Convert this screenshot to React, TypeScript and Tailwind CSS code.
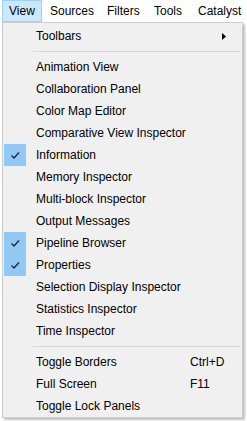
import React from "react";

type Item = { label: string; checked?: boolean; shortcut?: string; sub?: boolean } | "sep";

const items: Item[] = [
  { label: "Toolbars", sub: true },
  "sep",
  { label: "Animation View" },
  { label: "Collaboration Panel" },
  { label: "Color Map Editor" },
  { label: "Comparative View Inspector" },
  { label: "Information", checked: true },
  { label: "Memory Inspector" },
  { label: "Multi-block Inspector" },
  { label: "Output Messages" },
  { label: "Pipeline Browser", checked: true },
  { label: "Properties", checked: true },
  { label: "Selection Display Inspector" },
  { label: "Statistics Inspector" },
  { label: "Time Inspector" },
  "sep",
  { label: "Toggle Borders", shortcut: "Ctrl+D" },
  { label: "Full Screen", shortcut: "F11" },
  { label: "Toggle Lock Panels" },
];

function Check() {
  return (
    <svg width="22" height="22" viewBox="0 0 22 22">
      <path d="M7.5 11.5 L10 14 L15 8.5" fill="none" stroke="#262626" strokeWidth="1.4" />
    </svg>
  );
}

export default function App() {
  return (
    <div
      className="w-[247px] h-[421px] bg-white overflow-hidden text-[12px] text-black"
      style={{ fontFamily: '"Liberation Sans", Arial, sans-serif' }}
    >
      <div className="flex h-[22px] items-stretch pl-[2px]">
        <div className="flex items-center w-[40px] pl-[6px] bg-[#cce8ff] border border-[#99d1ff]">View</div>
        <div className="flex items-center w-[57px] pl-[8px]">Sources</div>
        <div className="flex items-center w-[47px] pl-[8px]">Filters</div>
        <div className="flex items-center w-[44px] pl-[8px]">Tools</div>
        <div className="flex items-center pl-[8px] whitespace-nowrap">Catalyst</div>
      </div>
      <div className="ml-[2px] w-[241px] bg-[#f0f0f0] border border-[#cccccc] pt-[2px] pl-[1px] pr-[1px] shadow-[2px_2px_2px_rgba(0,0,0,0.25)]">
        {items.map((it, i) =>
          it === "sep" ? (
            <div key={i} className="h-[9px] flex items-center pl-[29px] pr-[1px]">
              <div className="h-px w-full bg-[#d7d7d7]" />
            </div>
          ) : (
            <div key={i} className="h-[22px] flex items-center">
              <div className={`w-[22px] h-[22px] ${it.checked ? "bg-[#90c8f6]" : ""}`}>
                {it.checked ? <Check /> : null}
              </div>
              <div className="ml-[10px] w-[154px] whitespace-nowrap">{it.label}</div>
              <div className="w-[40px] whitespace-nowrap">{it.shortcut ?? ""}</div>
              {it.sub ? (
                <svg width="4" height="7" viewBox="0 0 4 7" className="ml-[-8px]">
                  <path d="M0 0 L4 3.5 L0 7 Z" fill="#000" />
                </svg>
              ) : null}
            </div>
          )
        )}
      </div>
    </div>
  );
}
